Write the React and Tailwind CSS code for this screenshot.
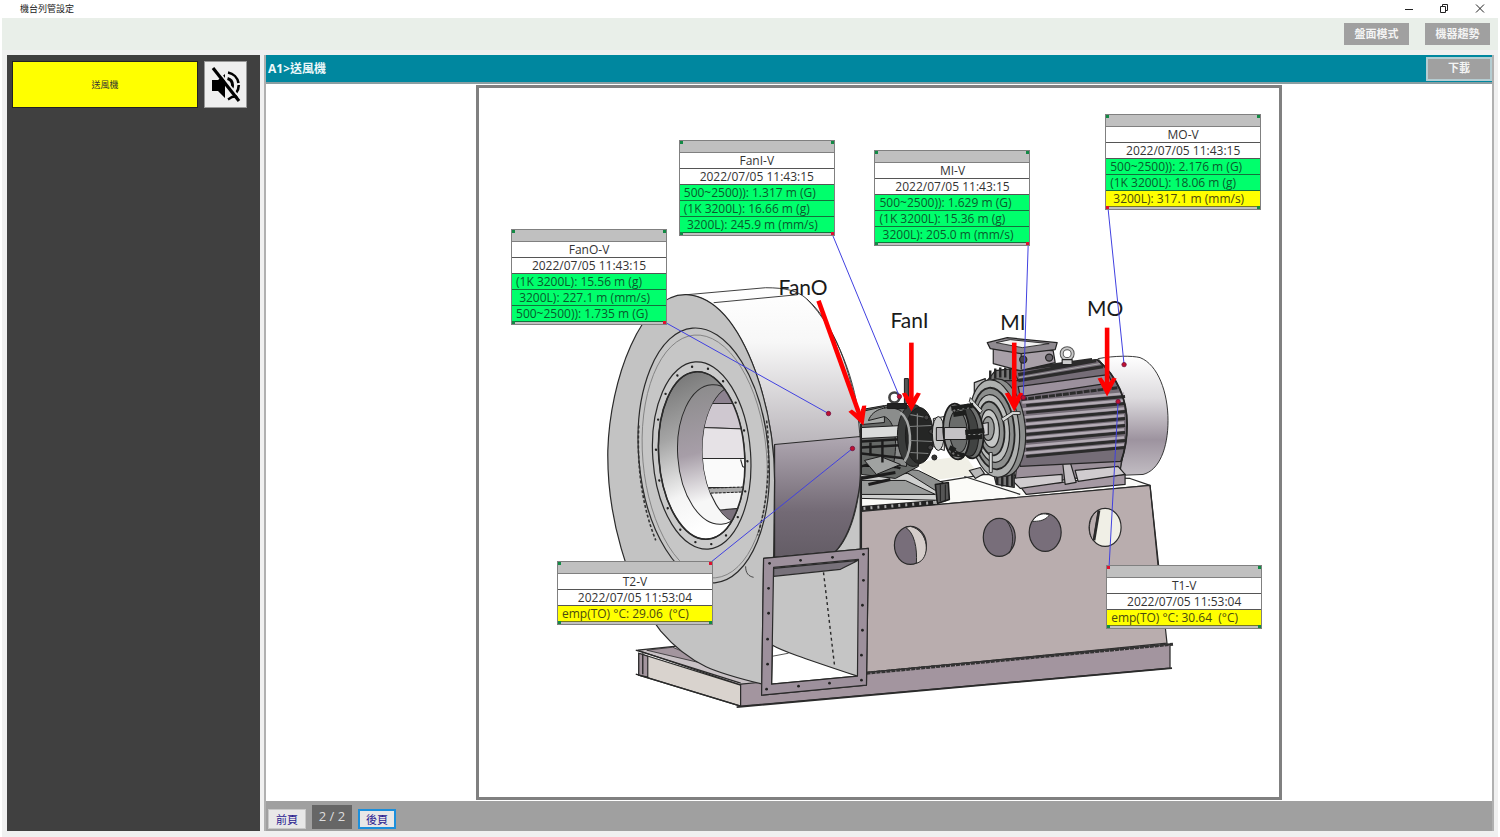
import { useState } from "react";

// drawing area of the machine view, used by the svg and by the tag cards
const VIEW = { x: 478, y: 87, w: 801, h: 710 };

const tags = [
  {
    name: "FanO-V",
    time: "2022/07/05 11:43:15",
    x: 510,
    y: 228,
    anchor: "br",
    line: [665, 322, 828, 413],
    rows: [
      { text: "(1K 3200L): 15.56 m (g)", level: "ok" },
      { text: " 3200L): 227.1 m (mm/s)", level: "ok" },
      { text: "500~2500)): 1.735 m (G)", level: "ok" },
    ],
  },
  {
    name: "FanI-V",
    time: "2022/07/05 11:43:15",
    x: 678,
    y: 139,
    anchor: "br",
    line: [832, 234, 899, 396],
    rows: [
      { text: "500~2500)): 1.317 m (G)", level: "ok" },
      { text: "(1K 3200L): 16.66 m (g)", level: "ok" },
      { text: " 3200L): 245.9 m (mm/s)", level: "ok" },
    ],
  },
  {
    name: "MI-V",
    time: "2022/07/05 11:43:15",
    x: 874,
    y: 149,
    anchor: "br",
    line: [1028, 243, 1023, 397],
    rows: [
      { text: "500~2500)): 1.629 m (G)", level: "ok" },
      { text: "(1K 3200L): 15.36 m (g)", level: "ok" },
      { text: " 3200L): 205.0 m (mm/s)", level: "ok" },
    ],
  },
  {
    name: "MO-V",
    time: "2022/07/05 11:43:15",
    x: 1105,
    y: 113,
    anchor: "bl",
    line: [1108, 208, 1124, 364],
    rows: [
      { text: "500~2500)): 2.176 m (G)", level: "ok" },
      { text: "(1K 3200L): 18.06 m (g)", level: "ok" },
      { text: " 3200L): 317.1 m (mm/s)", level: "warn" },
    ],
  },
  {
    name: "T2-V",
    time: "2022/07/05 11:53:04",
    x: 556,
    y: 561,
    anchor: "tr",
    line: [710, 562, 852, 448],
    rows: [{ text: "emp(TO) °C: 29.06  (°C)", level: "warn" }],
  },
  {
    name: "T1-V",
    time: "2022/07/05 11:53:04",
    x: 1106,
    y: 565,
    anchor: "tl",
    line: [1109, 566, 1118, 401],
    rows: [{ text: "emp(TO) °C: 30.64  (°C)", level: "warn" }],
  },
];

const corners = {
  tl: "top-0 left-0",
  tr: "top-0 right-0",
  bl: "bottom-0 left-0",
  br: "bottom-0 right-0",
};

const TagCard = ({ tag }) => {
  const left = `${((tag.x - VIEW.x) / VIEW.w) * 100}%`;
  const top = `${((tag.y - VIEW.y) / VIEW.h) * 100}%`;

  return (
    <div
      className="absolute w-[156px] border border-[#808080] bg-[#c0c0c0] text-xs leading-[15px] text-[#333]"
      style={{ left, top }}
    >
      <div className="h-3 border-b border-[#808080]" />
      <div className="border-b border-[#555] bg-white text-center">{tag.name}</div>
      <div className="border-b border-[#555] bg-white text-center">{tag.time}</div>
      {tag.rows.map((row) => (
        <div
          key={row.text}
          className={`overflow-hidden whitespace-pre border-b px-1 ${
            row.level === "ok"
              ? "border-[#14703c] bg-[#00ff6c] text-[#0a5a2c]"
              : "border-[#777722] bg-[#ffff00] text-[#4a4a10]"
          }`}
        >
          {row.text}
        </div>
      ))}
      <div className="h-0.5" />
      {Object.keys(corners).map((key) => (
        <span
          key={key}
          className={`absolute size-[3px] ${corners[key]} ${
            key === tag.anchor ? "bg-[#e01030]" : "bg-[#138a45]"
          }`}
        />
      ))}
    </div>
  );
};

const Arrow = ({ from, to }) => {
  const angle = (Math.atan2(to[1] - from[1], to[0] - from[0]) * 180) / Math.PI;
  const len = Math.hypot(to[0] - from[0], to[1] - from[1]);

  return (
    <g transform={`translate(${from[0]} ${from[1]}) rotate(${angle})`} fill="#ff0000">
      <rect x="0" y="-2.3" width={len - 7} height="4.6" />
      <path
        d={`M${len} 0 L${len - 18} -9.5 L${len - 19} -5.5 L${len - 11} 0 L${len - 19} 5.5 L${len - 18} 9.5 Z`}
      />
    </g>
  );
};

const boltRing = Array.from({ length: 18 }, (_, i) => {
  const a = (i * Math.PI * 2) / 18 + 0.1;
  return [701 + Math.cos(a) * 45.5, 455 + Math.sin(a) * 89.5];
});

const frameBolts = [
  [769, 563], [800, 560], [832, 557], [863, 554],
  [768, 588], [768, 613], [767, 639], [767, 664], [766, 689],
  [863, 580], [862, 605], [862, 630], [861, 655], [861, 680],
  [798, 686], [829, 683],
];

const FanHousing = () => (
  <g stroke="#2a2a2a" strokeWidth="1.2" strokeLinejoin="round">
    {/* lower part of the casing behind the outlet */}
    <path d="M774 470 L860 462 L860 556 L774 566 Z" fill="#c6c6c6" />
    {/* drum */}
    <path
      d="M686 294 L765 287 C785 287 797 290 806 298 C834 322 850 372 857 412 C861 440 861 470 859 488 C855 520 845 545 830 556 L774 562 L774 470 C773 440 767 405 755 371 C738 325 715 296 686 294 Z"
      fill="url(#drumTop)"
      strokeWidth="0.9"
    />
    <path
      d="M774 444 L860 436 C862 460 860 485 857 498 C852 525 843 545 830 556 L774 562 Z"
      fill="url(#drumLow)"
    />
    <path d="M713 302 L797 294 M806 298 C838 330 856 385 859 423" fill="none" strokeWidth="0.9" />
    <path d="M860 423 L860 552" strokeWidth="1.5" />
    {/* front plate */}
    <path
      d="M686 294 C716 296 738 325 755 371 C767 405 774 440 774 480 L773 560 L762 684 C717 673 690 666 660 631 C626 586 606 515 607 450 C609 380 640 292 686 294 Z"
      fill="#c3c3c3"
    />
    <ellipse cx="703" cy="455" rx="65" ry="128" transform="rotate(-5 703 455)" fill="#c6c6c6" />
    <ellipse cx="704" cy="456" rx="62" ry="122" transform="rotate(-5 704 456)" fill="none" stroke="#777" strokeWidth="0.8" />
    <path d="M638 425 C636 465 641 505 655 540 M766 420 C770 455 768 500 757 535" fill="none" stroke="#333" strokeWidth="1.6" strokeDasharray="3 2" />
    <ellipse cx="701" cy="455" rx="49" ry="94" transform="rotate(-4 701 455)" fill="#cacaca" />
    {boltRing.map(([x, y], i) => (
      <circle key={i} cx={x} cy={y} r="1.2" fill="#222" stroke="none" transform="rotate(-4 701 455)" />
    ))}
    <ellipse cx="701" cy="455" rx="43" ry="84" transform="rotate(-4 701 455)" fill="url(#cone)" />
    <g clipPath="url(#inlet)">
      <ellipse cx="716" cy="454" rx="39" ry="70" transform="rotate(-4 716 454)" fill="url(#coneInner)" strokeWidth="1" />
      <ellipse cx="739" cy="454" rx="37" ry="69" transform="rotate(-3 739 454)" fill="#f5f5f5" />
      <g clipPath="url(#opening)" strokeWidth="1.1">
        <path d="M700 385 H760 V403 H700 Z" fill="#8d8290" />
        <path d="M700 403 H760 V429 L700 427 Z" fill="#cfc8d0" />
        <path d="M700 427 L760 429 V458 H700 Z" fill="#e6e2e6" />
        <path d="M700 458 H760 V487 H700 Z" fill="#fafafa" />
        <path d="M740 459 L742 466 L746 468" fill="none" />
        <path d="M700 488 L760 486 V491 L700 493 Z" fill="#aaa" strokeDasharray="3 1" />
        <path d="M715 510 L760 506 V525 H715 Z" fill="#7a717c" />
      </g>
    </g>
    <ellipse cx="701" cy="455" rx="43" ry="84" transform="rotate(-4 701 455)" fill="none" strokeWidth="1.6" />
    <path d="M745 566 C745 573 748 576 753 577" fill="none" strokeWidth="0.8" />
  </g>
);

const BaseFrame = () => (
  <g stroke="#2a2a2a" strokeWidth="1.2" strokeLinejoin="round">
    {/* top of the pedestal */}
    <path d="M861 494 L985 474 L1130 478 L1150 485 L861 511 Z" fill="#fbfbf8" />
    <path d="M915 462 L965 455 L978 474 L930 480 Z" fill="#f0efe6" stroke="none" />
    <path d="M964 476 L1020 494" />
    {/* side plate */}
    <path d="M861 511 L1150 485 L1167 643 L861 673 Z" fill="#b9adae" />
    <path d="M861 508 L935 502" stroke="#222" strokeWidth="5" />
    <path d="M863 508 L935 502" stroke="#aaa" strokeWidth="3" strokeDasharray="2 5" />
    <path d="M1150 485 L1158 565" />
    {/* inspection holes */}
    <ellipse cx="910" cy="545" rx="16" ry="19" fill="#786e7a" />
    <path d="M905 527 C914 532 917 548 916 563 C931 559 929 530 910 526 Z" fill="#d5cdca" strokeWidth="1" />
    <ellipse cx="999" cy="537" rx="16" ry="19" fill="#786e7a" />
    <path d="M1006 520 C1014 530 1014 543 1009 553" fill="none" strokeWidth="1" />
    <ellipse cx="1045" cy="532" rx="16" ry="19" fill="#786e7a" />
    <path d="M1032 521 C1037 513 1045 512 1049 515 C1044 521 1037 521 1032 521 Z" fill="#fff" strokeWidth="1" />
    <ellipse cx="1105" cy="527" rx="16" ry="19" fill="#f0efe6" />
    <path d="M1098 510 L1093 540 C1087 532 1088 516 1098 510 Z" fill="#b9adae" strokeWidth="1" />
    <path d="M1099 510 L1094 540" strokeWidth="2.5" />
    {/* bottom beams */}
    <path d="M637 650 L676 646 L762 684 L740 685 Z" fill="#c9c2c6" />
    <path d="M646 650 L672 647 L718 667 Z" fill="#a3959e" strokeWidth="0.8" />
    <path d="M638 653 L740 685 L740 706 L638 675 Z" fill="#d9d3ce" />
    <path d="M638 653 L647 656 V677 L638 675 Z" fill="#a3959e" />
    <path d="M635 650 L740 683 M635 674 L740 706 M642 653 V674" strokeWidth="1.4" />
    <path d="M740 684 L1170 644 L1170 668 L740 706 Z" fill="#a3959f" />
    <path d="M866 673 L1173 644" strokeWidth="3" stroke="#333" strokeDasharray="4 1" />
    <path d="M736 707 L1172 668" strokeWidth="1.8" />
  </g>
);

const Outlet = () => (
  <g stroke="#2a2a2a" strokeWidth="1.2" strokeLinejoin="round">
    <path d="M763 558 L868 548 L866 685 L761 695 Z" fill="#c5c5c5" />
    <path d="M773 568 L858 560 L840 569 L773 576 Z" fill="#77717a" />
    <path d="M772 645 C780 650 800 657 857 676 L771 684 Z" fill="#ffffff" />
    <path d="M772 656 L788 653" strokeWidth="0.8" />
    <path d="M823 572 L834 665" strokeWidth="1.4" strokeDasharray="3 3" />
    <path
      fillRule="evenodd"
      d="M763 558 L868 548 L866 685 L761 695 Z M773 567 L771 684 L857 676 L858 559 Z"
      fill="#9d909c"
    />
    {frameBolts.map(([x, y]) => (
      <circle key={`${x}-${y}`} cx={x} cy={y} r="1.4" fill="#222" stroke="none" />
    ))}
  </g>
);

const Bearing = () => (
  <g stroke="#1c1c1c" strokeWidth="1" strokeLinejoin="round">
    {/* pedestal legs */}
    <path d="M861 476 L907 473 L948 486 L944 500 L861 498 Z" fill="#cfd0cf" />
    <path d="M861 480 H905 L935 494 H861 Z" fill="#9a9c9b" />
    <path d="M900 468 L918 470 L948 485 L935 490 Z" fill="#8f9190" />
    <path d="M935 484 L948 482 L949 499 L937 503 Z" fill="#555" strokeWidth="1.6" />
    <path d="M940 484 V501 M945 484 V501" />
    {/* body */}
    <path d="M861 409 L884 405 L905 403 L918 415 V466 L895 478 L861 474 Z" fill="#666967" />
    <path d="M861 411 L884 406 L884 422 L861 424 Z" fill="#a5a8a6" />
    <path d="M868 420 C872 408 888 404 900 410 C908 420 910 440 906 466 L893 464 C898 440 894 420 884 416 Z" fill="#8b8d8c" />
    <path d="M861 427 L902 425 V436 L861 438 Z" fill="#dadcdb" />
    <path d="M861 441 L912 438 M861 447 L912 444 M861 453 L906 458 M861 466 L880 460 L900 468" strokeWidth="2.4" />
    <path d="M864 460 L880 456 L900 464 L876 474 Z" fill="#a0a2a1" />
    <path d="M861 478 L895 472 M868 484 L890 479" strokeWidth="3" />
    <path d="M882 440 V462 M870 442 V455" strokeWidth="2.4" />
    <ellipse cx="913" cy="435" rx="16" ry="31" fill="#3a3c3b" />
    <ellipse cx="919" cy="435" rx="14" ry="28" fill="#252625" />
    <path d="M900 412 C911 420 913 448 904 461" stroke="#a5a7a6" fill="none" strokeWidth="2.5" />
    <path d="M917 413 V459 M910 414 L926 417 M909 426 L931 425 M910 440 L932 441 M910 452 L928 453" stroke="#7f8180" strokeWidth="1.2" />
    <circle cx="926" cy="417" r="2.5" fill="#444" />
    <circle cx="931" cy="431" r="2.5" fill="#444" />
    <circle cx="930" cy="447" r="2.5" fill="#444" />
    <circle cx="934" cy="457" r="2.5" fill="#333" />
    {/* lifting eye and grease pipe */}
    <circle cx="894" cy="397" r="5" fill="#fff" stroke="#444" strokeWidth="2.6" />
    <path d="M887 403 H906 V408 H887 Z" fill="#222" />
    <path d="M904 378 H908 V403 H904 Z" fill="#555" />
  </g>
);

const Coupling = () => (
  <g stroke="#1c1c1c" strokeWidth="1" strokeLinejoin="round">
    {/* shaft */}
    <path d="M933 418 L944 416 V450 L933 446 Z" fill="#f2f2f0" />
    <ellipse cx="938" cy="433" rx="6" ry="17" fill="#c8c9c8" />
    <path d="M936 427 H950 V440 H936 Z" fill="#b6b4b7" />
    {/* rear disc */}
    <ellipse cx="970" cy="431" rx="13" ry="27" transform="rotate(-6 970 431)" fill="#6f7170" strokeWidth="1.8" />
    <ellipse cx="967" cy="431" rx="11" ry="25" transform="rotate(-6 967 431)" fill="#414342" />
    {/* front disc */}
    <ellipse cx="956" cy="431" rx="13" ry="28" transform="rotate(-4 956 431)" fill="#8c8e8d" strokeWidth="1.8" />
    <ellipse cx="958" cy="431" rx="9" ry="21" transform="rotate(-4 958 431)" fill="#6a6c6b" />
    <path d="M944 427 H966 V439 H944 Z" fill="#c4c2c5" />
    {/* bolts */}
    <path d="M951 408 L973 405 M953 414 L966 412 M965 432 L984 430 M966 437 L982 436 M950 453 L964 455 M949 447 L955 450" strokeWidth="5" stroke="#1d1e1d" />
    <path d="M952 410 L972 407 M968 434 H982 M952 454 L960 455" stroke="#8a8c8b" strokeDasharray="2 3" />
    <circle cx="954" cy="410" r="1.6" fill="#777" />
    <circle cx="953" cy="453" r="1.6" fill="#777" />
  </g>
);

const motorFins = [405, 412, 420, 427, 434, 441, 449, 456];

const Motor = () => (
  <g stroke="#242424" strokeWidth="1.2" strokeLinejoin="round">
    {/* fan cover */}
    <path
      d="M1098 358 C1115 355 1132 355 1140 357 C1158 364 1168 392 1168 420 C1168 448 1159 470 1143 474 L1118 475 C1130 440 1128 390 1098 358 Z"
      fill="url(#cover)"
      strokeWidth="0.9"
    />
    {/* feet */}
    <path d="M1017 458 L1122 455 L1120 472 L1030 484 L1015 480 Z" fill="#9b909a" />
    <path d="M1020 486 L1062 482 L1125 474 V484 L1026 494 Z" fill="#a599a3" />
    <path d="M1010 478 L1062 474 V482 L1020 488 Z" fill="#d0cccf" />
    <path d="M1075 470 L1118 466 L1125 474 L1078 481 Z" fill="#d0cccf" />
    <path d="M1062 458 L1069 458 L1076 482 L1065 484 Z" fill="#c5c0c4" />
    {/* body */}
    <path
      d="M1000 372 L1097 359 C1118 376 1127 400 1127 424 C1127 440 1125 450 1121 461 L1020 466 Z"
      fill="#756d77"
    />
    <path d="M1018 374 L1096 360 M1018 380 L1103 366 M1020 369 L1092 359" strokeWidth="3.4" stroke="#2b2b2b" />
    <path d="M1019 377 L1100 363" strokeWidth="1" stroke="#aaa" />
    <path d="M1018 386 L1108 374 L1112 382 L1020 396 Z" fill="#9c919d" />
    <path d="M1021 399 L1118 387" strokeWidth="3" stroke="#2b2b2b" strokeDasharray="6 1" />
    {motorFins.map((y) => (
      <g key={y}>
        <path d={`M1026 ${y} L1125 ${y - 9}`} stroke="#2b2b2b" strokeWidth="3" />
        <path d={`M1022 ${y - 3} L1124 ${y - 12}`} stroke="#b3abb4" strokeWidth="2.6" />
      </g>
    ))}
    <path d="M1097 359 C1118 376 1127 400 1127 424 C1127 440 1125 450 1121 461" fill="none" strokeWidth="1.8" />
    {/* cooling ribs round the flange */}
    <path d="M987 380 L995 370 L1012 368 L1018 380 Z M994 476 L1014 470 V487 L996 484 Z" fill="#777" />
    <path d="M990 379 V370 M995 378 V368 M1000 377 V367 M1005 377 V367 M1010 379 V368 M997 474 V484 M1002 474 V486 M1007 474 V486 M1012 470 V486" strokeWidth="2.4" />
    <path d="M974 382 L985 378 V390 L974 394 Z M969 470 L980 467 L984 473 L975 478 Z" fill="#b9b9b9" />
    <ellipse cx="1001" cy="427" rx="24" ry="49" transform="rotate(-6 1001 427)" fill="#8b8d8c" />
    <ellipse cx="994" cy="428" rx="25" ry="49" transform="rotate(-6 994 428)" fill="#aeb0af" />
    <ellipse cx="993" cy="428" rx="21" ry="41" transform="rotate(-6 993 428)" fill="#8c8e8d" strokeWidth="1.8" />
    <ellipse cx="992" cy="428" rx="17" ry="34" transform="rotate(-6 992 428)" fill="#bcbebd" />
    <ellipse cx="991" cy="428" rx="13" ry="27" transform="rotate(-6 991 428)" fill="#8f9190" strokeWidth="1.8" />
    <ellipse cx="990" cy="428" rx="9" ry="19" transform="rotate(-6 990 428)" fill="#c5c7c6" />
    <ellipse cx="988" cy="428" rx="6" ry="12" fill="#9a9c9b" />
    <path d="M978 424 L988 422 V434 L978 436 Z" fill="#d0cfd1" />
    <path d="M1001 418 L1012 411 L1020 411 V414 L1013 414 L1003 421 Z M989 452 H992 V472 H989 Z M970 397 L982 410 L980 413 L969 401 Z" fill="#d6d8d7" strokeWidth="0.9" />
    {/* terminal box */}
    <path d="M993 348 L1053 350 L1055 362 L1020 370 L993 363 Z" fill="#a8a0a8" />
    <path d="M1021 352 L1021 369" />
    <path d="M987 342 L1007 337 L1057 342 L1055 349 L1021 353 L990 348 Z" fill="#8f8a90" />
    <path d="M996 342 L1010 339 L1049 343 L1022 347 Z" fill="#f1f1f1" strokeWidth="0.9" />
    <circle cx="1023" cy="359" r="3.6" fill="#4b474d" />
    <circle cx="1049" cy="357" r="3.6" fill="#6a656c" />
    <circle cx="1067" cy="353" r="5.5" fill="#fff" stroke="#555" strokeWidth="4" />
    <circle cx="1067" cy="353" r="5.5" fill="none" stroke="#c8c8c8" strokeWidth="2" />
    <path d="M1062 359 H1072 V364 H1062 Z" fill="#ccc" />
  </g>
);

const MachineDrawing = () => (
  <svg
    viewBox={`${VIEW.x} ${VIEW.y} ${VIEW.w} ${VIEW.h}`}
    className="block size-full"
    role="img"
    aria-label="送風機"
  >
    <defs>
      <linearGradient id="drumTop" x1="0" y1="0" x2="0" y2="1">
        <stop offset="0" stopColor="#ffffff" />
        <stop offset="0.2" stopColor="#f7f7f7" />
        <stop offset="0.55" stopColor="#bdb9be" />
        <stop offset="1" stopColor="#7a727c" />
      </linearGradient>
      <linearGradient id="drumLow" x1="0" y1="0" x2="0" y2="1">
        <stop offset="0" stopColor="#b0a8b2" />
        <stop offset="0.6" stopColor="#736a75" />
        <stop offset="1" stopColor="#625b64" />
      </linearGradient>
      <linearGradient id="cone" x1="0" y1="0" x2="0.2" y2="1">
        <stop offset="0" stopColor="#6e6e6e" />
        <stop offset="0.4" stopColor="#a5a5a5" />
        <stop offset="0.75" stopColor="#f4f4f4" />
        <stop offset="1" stopColor="#ffffff" />
      </linearGradient>
      <linearGradient id="coneInner" x1="0" y1="0" x2="0.1" y2="1">
        <stop offset="0" stopColor="#8a8a8a" />
        <stop offset="0.5" stopColor="#a79ea8" />
        <stop offset="0.85" stopColor="#f7f7f7" />
      </linearGradient>
      <linearGradient id="cover" x1="0" y1="0" x2="0" y2="1">
        <stop offset="0" stopColor="#ffffff" />
        <stop offset="0.35" stopColor="#dddbde" />
        <stop offset="0.7" stopColor="#9d939f" />
        <stop offset="1" stopColor="#c2bdc3" />
      </linearGradient>
      <clipPath id="inlet">
        <ellipse cx="701" cy="455" rx="43" ry="84" transform="rotate(-4 701 455)" />
      </clipPath>
      <clipPath id="opening">
        <ellipse cx="739" cy="454" rx="37" ry="69" transform="rotate(-3 739 454)" />
      </clipPath>
    </defs>

    <BaseFrame />
    <FanHousing />
    <Bearing />
    <Motor />
    <Coupling />
    <Outlet />

    <g fontFamily="Lato, sans-serif" fontSize="21" fill="#1a1a1a">
      <text x="778" y="294">FanO</text>
      <text x="890" y="327">FanI</text>
      <text x="1000" y="329">MI</text>
      <text x="1087" y="315">MO</text>
    </g>
    <Arrow from={[818, 300]} to={[863, 425]} />
    <Arrow from={[911, 342]} to={[911, 411]} />
    <Arrow from={[1014, 342]} to={[1014, 411]} />
    <Arrow from={[1107, 327]} to={[1107, 396]} />

    {tags.map(({ name, line: [x1, y1, x2, y2] }) => (
      <g key={name}>
        <line x1={x1} y1={y1} x2={x2} y2={y2} stroke="#4040e0" strokeWidth="1" />
        <circle cx={x2} cy={y2} r="2.2" fill="#c01030" stroke="#701040" strokeWidth="0.8" />
      </g>
    ))}
  </svg>
);

const MuteIcon = () => (
  <svg viewBox="0 0 30 38" className="h-[38px] w-[30px]" fill="none" stroke="currentColor">
    <path d="M1 14 H7 L14 8 V32 L7 25 H1 Z" fill="currentColor" stroke="none" />
    <path d="M17 6.5 A13 13 0 0 1 27.5 17" strokeWidth="2.6" />
    <path d="M27.8 19 A13 13 0 0 1 25 27" strokeWidth="2.6" />
    <path d="M16.5 12.5 A7 7 0 0 1 21.5 19 A7 7 0 0 1 21 22" strokeWidth="3" />
    <path d="M17 33.5 L21 31 L27 30" strokeWidth="2.4" />
    <path d="M4.500 1.500 L30 33.500" stroke="#efefef" strokeWidth="2" />
    <path d="M2 2 L28 35" strokeWidth="3.2" />
  </svg>
);

const WindowBar = () => (
  <div className="flex h-[18px] items-center justify-between bg-white pr-3 pl-5">
    <span className="text-[9px] text-[#222]">機台列管設定</span>
    <div className="flex items-center gap-5 text-[#222]">
      <button type="button" aria-label="最小化" className="flex size-4 items-center justify-center">
        <svg viewBox="0 0 16 16" className="size-4" stroke="currentColor" fill="none">
          <path d="M5 8.5 H13" />
        </svg>
      </button>
      <button type="button" aria-label="還原" className="flex size-4 items-center justify-center">
        <svg viewBox="0 0 16 16" className="size-4" stroke="currentColor" fill="none">
          <path d="M4.5 5.500 H9.5 V11.5 H4.5 Z M6.5 5 V3.5 H11.5 V9.5 H10" />
        </svg>
      </button>
      <button type="button" aria-label="關閉" className="flex size-4 items-center justify-center">
        <svg viewBox="0 0 16 16" className="size-4" stroke="currentColor" fill="none">
          <path d="M4 3.500 L12 11.500 M12 3.500 L4 11.500" />
        </svg>
      </button>
    </div>
  </div>
);

const App = () => {
  const [muted, setMuted] = useState(true);
  const [page, setPage] = useState(2);

  return (
    <div className="flex h-screen flex-col bg-white font-['Open_Sans','Noto_Sans_CJK_TC',sans-serif]">
      <WindowBar />

      <div className="mx-0.5 flex min-h-0 flex-1 flex-col bg-[#f0f0f0]">
        {/* TOOLBAR */}
        <div className="flex h-8 items-center justify-end gap-4 bg-[#e9efe9] pr-2">
          <button type="button" className="h-[22px] w-[65px] bg-[#a0a0a0] text-[11px] font-bold text-[#f4f4f4]">
            盤面模式
          </button>
          <button type="button" className="h-[22px] w-[65px] bg-[#a0a0a0] text-[11px] font-bold text-[#f4f4f4]">
            機器趨勢
          </button>
        </div>

        <div className="flex min-h-0 flex-1 gap-1 pt-[5px] pr-1 pb-1.5 pl-[5px]">
          {/* SIDEBAR */}
          <aside className="w-[253px] shrink-0 bg-[#404040] px-[5px] pt-1.5">
            <div className="flex gap-1.5">
              <button
                type="button"
                className="h-[47px] w-[186px] border border-[#222] bg-[#ffff00] text-[9px] text-[#333]"
              >
                送風機
              </button>
              <button
                type="button"
                aria-label="靜音"
                aria-pressed={muted}
                onClick={() => setMuted(!muted)}
                className="flex h-[47px] w-[43px] items-center justify-center border border-[#999] bg-[#efefef] text-black"
              >
                <MuteIcon />
              </button>
            </div>
          </aside>

          {/* MACHINE VIEW */}
          <main className="flex min-w-0 flex-1 flex-col border-x-2 border-[#b0b0b0] bg-white">
            <div className="flex h-[29px] shrink-0 items-center justify-between border-b-2 border-[#8a9ea2] bg-[#00879f] pl-0.5">
              <h1 className="text-xs font-bold text-[#eef8fa]">A1&gt;送風機</h1>
              <button
                type="button"
                className="h-6 w-[66px] border-2 border-[#b5cdd2] bg-[#a0a0a0] text-[11px] font-bold text-[#f4f4f4]"
              >
                下載
              </button>
            </div>

            <div className="flex min-h-0 flex-1 justify-center py-px">
              <div className="relative aspect-[807/716] border-3 border-[#808080] bg-white">
                <MachineDrawing />
                {tags.map((tag) => (
                  <TagCard key={tag.name} tag={tag} />
                ))}
              </div>
            </div>

            {/* PAGER */}
            <div className="flex h-[30px] shrink-0 items-end gap-1.5 bg-[#a0a0a0] px-0.5 pb-0.5">
              <button
                type="button"
                onClick={() => setPage(1)}
                className="h-5 w-[38px] border border-[#c8c8c8] bg-[#e8e8e8] text-[11px] leading-none text-[#2a1a90]"
              >
                前頁
              </button>
              <span className="flex h-6 w-10 items-center justify-center bg-[#666] text-[13px] text-[#ddd]">
                {page} / 2
              </span>
              <button
                type="button"
                onClick={() => setPage(2)}
                className="h-5 w-[38px] border-2 border-[#1b8fdc] bg-[#e8e8e8] text-[11px] leading-none text-[#2a1a90]"
              >
                後頁
              </button>
            </div>
          </main>
        </div>
      </div>
    </div>
  );
};

export default App;
